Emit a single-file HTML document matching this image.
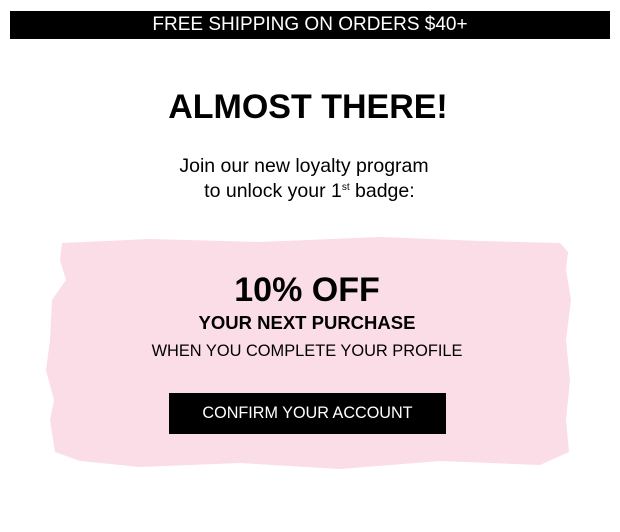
<!DOCTYPE html>
<html><head><style>
body{margin:0;width:620px;height:532px;background:#fff;position:relative;overflow:hidden;font-family:"Liberation Sans",Arial,sans-serif;color:#000}
.a{position:absolute;left:0;width:620px;text-align:center;white-space:nowrap}
</style></head><body>
<div style="position:absolute;left:10px;top:11px;width:600px;height:28px;background:#000"></div>
<div class="a" style="left:10px;width:600px;top:13px;color:#fff;font-size:19px;line-height:24px">FREE SHIPPING ON ORDERS $40+</div>
<div class="a" style="top:87px;font-size:34px;font-weight:bold;line-height:40px;left:-2px">ALMOST THERE!</div>
<div class="a" style="top:154px;font-size:19.5px;line-height:25px;left:-6px">Join our new loyalty program<br>&nbsp;&nbsp;to unlock your 1<sup style="font-size:10px;vertical-align:7px;line-height:0">st</sup> badge:</div>
<svg style="position:absolute;left:0;top:0" width="620" height="532">
<path fill="#fadde7" d="M62 243 L150 239 L260 242 L380 237 L480 241 L560 243 L568 252 L566 270 L571 300 L566 340 L570 380 L566 420 L569 452 L540 465 L440 461 L340 469 L240 463 L140 467 L80 461 L55 452 L50 420 L54 400 L46 370 L50 340 L52 300 L66 280 L60 260 Z"/>
</svg>
<div class="a" style="top:271px;font-size:34px;font-weight:bold;line-height:38px;left:-3px">10% OFF</div>
<div class="a" style="top:312px;font-size:18.5px;font-weight:bold;line-height:22px;left:-3px">YOUR NEXT PURCHASE</div>
<div class="a" style="top:341px;font-size:16.4px;line-height:20px;left:-3px">WHEN YOU COMPLETE YOUR PROFILE</div>
<div style="position:absolute;left:169px;top:393px;width:277px;height:41px;background:#000;color:#fff;font-size:16.2px;line-height:41px;text-align:center">CONFIRM YOUR ACCOUNT</div>
</body></html>
